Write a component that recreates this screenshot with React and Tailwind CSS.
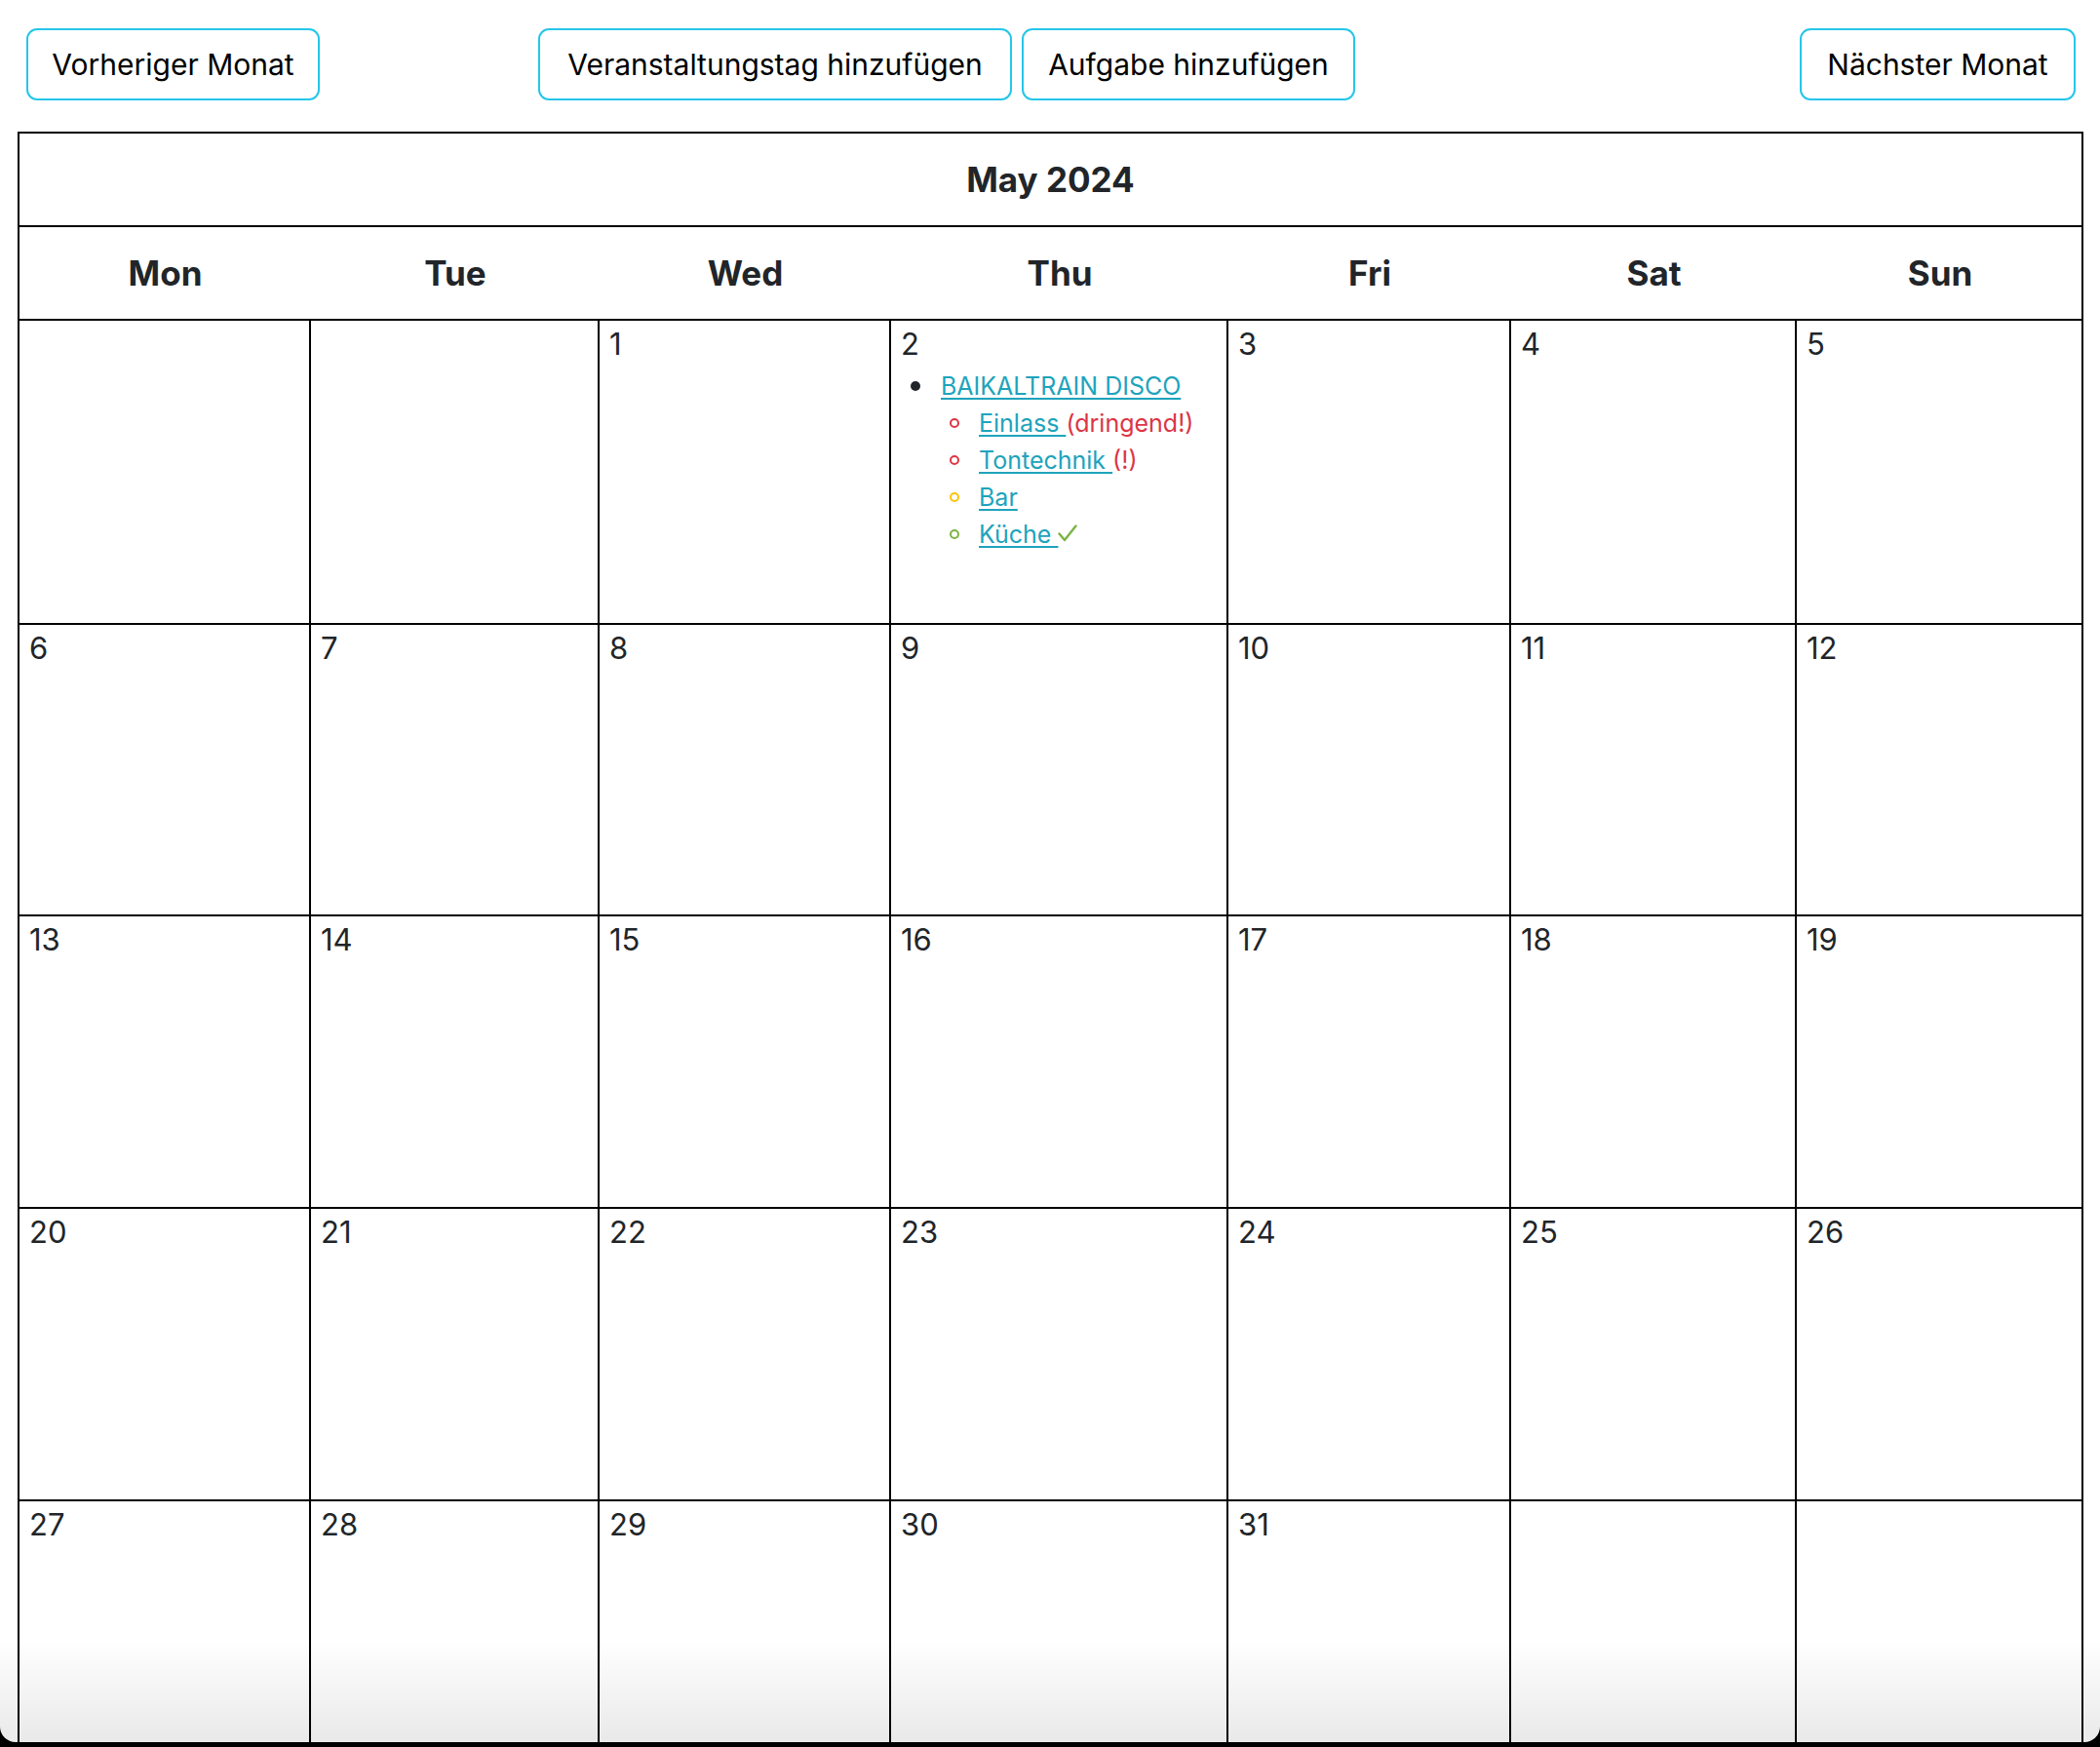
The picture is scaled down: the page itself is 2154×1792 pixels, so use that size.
import React from 'react'

const cols = 'grid grid-cols-[299px_296px_299px_346px_290px_293px_294px]'
const days = ['Mon', 'Tue', 'Wed', 'Thu', 'Fri', 'Sat', 'Sun']

const weeks = [
  [null, null, 1, 2, 3, 4, 5],
  [6, 7, 8, 9, 10, 11, 12],
  [13, 14, 15, 16, 17, 18, 19],
  [20, 21, 22, 23, 24, 25, 26],
  [27, 28, 29, 30, 31, null, null],
]
const rowHeights = ['h-[312px]', 'h-[299px]', 'h-[300px]', 'h-[300px]', 'h-[300px]']

const Check = () => (
  <svg width="20" height="20" viewBox="0 0 20 20" className="inline-block mb-[2px]">
    <path d="M1.5 10.5 L7 17 L18.5 2.5" fill="none" stroke="#7cb342" strokeWidth="2.4" strokeLinecap="round" strokeLinejoin="round" />
  </svg>
)

const tasks = [
  { name: 'Einlass ', ring: 'border-[#dc3545]', note: '(dringend!)', noteColor: 'text-[#dc3545]' },
  { name: 'Tontechnik ', ring: 'border-[#dc3545]', note: '(!)', noteColor: 'text-[#dc3545]' },
  { name: 'Bar', ring: 'border-[#ffc107]' },
  { name: 'Küche ', ring: 'border-[#7cb342]', note: <Check />, noteColor: 'flex items-center' },
]

function Btn({ children, w }) {
  return (
    <button className={`${w} h-[74px] border-2 border-[#25c6ea] rounded-[11px] bg-white text-black text-[30px] leading-[48px] text-center whitespace-nowrap`}>
      {children}
    </button>
  )
}

function EventList() {
  return (
    <ul className="text-[25px] leading-[38px]">
      <li className="flex items-center h-[38px]">
        <span className="w-[41px] flex">
          <span className="ml-[10px] w-[10px] h-[10px] rounded-full bg-[#212529]" />
        </span>
        <a className="text-[#1ea3bc] underline decoration-2 underline-offset-[3px]">BAIKALTRAIN DISCO</a>
      </li>
      {tasks.map((t, i) => (
        <li key={i} className="flex items-center h-[38px] whitespace-pre">
          <span className="w-[80px] flex">
            <span className={`ml-[50px] w-[10px] h-[10px] rounded-full border-2 ${t.ring}`} />
          </span>
          <a className="text-[#1ea3bc] underline decoration-2 underline-offset-[3px]">{t.name}</a>
          {t.note && <span className={t.noteColor}>{t.note}</span>}
        </li>
      ))}
    </ul>
  )
}

export default function App() {
  return (
    <div className="min-h-screen bg-white font-['Inter','Noto_Sans',sans-serif] text-[#212529]">
      <div className="flex items-start pt-[29px] pl-[27px] pr-[25px]">
        <Btn w="w-[301px]">Vorheriger Monat</Btn>
        <div className="flex gap-[10px] ml-[224px]">
          <Btn w="w-[486px]">Veranstaltungstag hinzufügen</Btn>
          <Btn w="w-[342px]">Aufgabe hinzufügen</Btn>
        </div>
        <div className="ml-auto">
          <Btn w="w-[283px]">Nächster Monat</Btn>
        </div>
      </div>

      <div className="ml-[18px] mt-[32px] w-[2119px] border-l-2 border-t-2 border-black">
        <div className="h-[96px] border-r-2 border-b-2 border-black flex items-center justify-center text-[35px] font-bold">
          May 2024
        </div>
        <div className={`${cols} h-[96px] border-r-2 border-b-2 border-black`}>
          {days.map((d) => (
            <div key={d} className="flex items-center justify-center text-[35px] font-bold">{d}</div>
          ))}
        </div>
        {weeks.map((week, wi) => (
          <div key={wi} className={`${cols} ${rowHeights[wi]}`}>
            {week.map((n, di) => (
              <div key={di} className="border-r-2 border-b-2 border-black pl-[10px]">
                {n && <div className="text-[31px] leading-[48px]">{n}</div>}
                {n === 2 && <EventList />}
              </div>
            ))}
          </div>
        ))}
      </div>

      <div className="pointer-events-none fixed inset-x-0 bottom-0 h-[110px] bg-gradient-to-b from-transparent to-[rgba(0,0,0,0.09)]" />
      <div className="pointer-events-none fixed inset-x-0 bottom-0 h-[5px] bg-black" />
      <div className="pointer-events-none fixed left-0 bottom-[5px] w-[16px] h-[16px] bg-black">
        <div className="w-full h-full bg-[#ececec] rounded-bl-[16px]" />
      </div>
      <div className="pointer-events-none fixed right-0 bottom-[5px] w-[16px] h-[16px] bg-black">
        <div className="w-full h-full bg-[#ececec] rounded-br-[16px]" />
      </div>
    </div>
  )
}
